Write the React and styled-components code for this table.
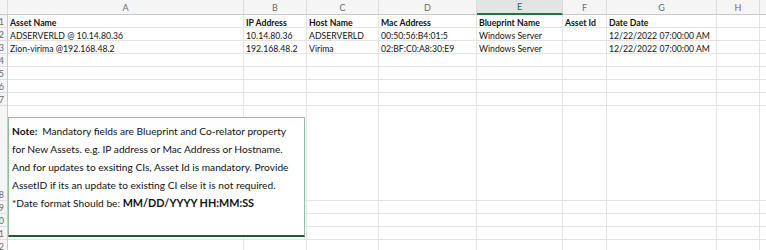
import React from "react";
import styled, { createGlobalStyle } from "styled-components";

const GlobalStyle = createGlobalStyle`
  html, body {
    margin: 0;
    padding: 0;
    background: #ffffff;
    overflow: hidden;
  }
  body {
    font-family: Lato, "Open Sans", sans-serif;
  }
`;

// column widths (row header first), the last column runs off the edge
const COLS = [
  { key: "", width: 22 },
  { key: "A", width: 236 },
  { key: "B", width: 63 },
  { key: "C", width: 72 },
  { key: "D", width: 98 },
  { key: "E", width: 86 },
  { key: "F", width: 44 },
  { key: "G", width: 110 },
  { key: "H", width: 43 },
  { key: "I", width: 40 },
];

const ROW_HEIGHTS = [13, 13, 13, 13, 13, 13, 13, 95, 13, 13, 13, 13];

const DATA = [
  ["Asset Name", "IP Address", "Host Name", "Mac Address", "Blueprint Name", "Asset Id", "Date Date", ""],
  ["ADSERVERLD @ 10.14.80.36", "10.14.80.36", "ADSERVERLD", "00:50:56:B4:01:5", "Windows Server", "", "12/22/2022 07:00:00 AM", ""],
  ["Zion-virima @192.168.48.2", "192.168.48.2", "Virima", "02:BF:C0:A8:30:E9", "Windows Server", "", "12/22/2022 07:00:00 AM", ""],
];

const NOTE_LINES = [
  "Mandatory fields are Blueprint and Co-relator property",
  "for New Assets. e.g. IP address or Mac Address or Hostname.",
  "And for updates to exsiting CIs, Asset Id is mandatory. Provide",
  "AssetID if its an update to existing CI else it is not required.",
];

export default function App() {
  return (
    <>
      <GlobalStyle />
      <Viewport>
        <Sheet>
          <HeaderRow>
            {COLS.map((c, i) => (
              <ColHead key={i} $w={c.width} $active={c.key === "E"}>
                {c.key}
              </ColHead>
            ))}
          </HeaderRow>
          {ROW_HEIGHTS.map((h, r) => (
            <Row key={r}>
              <RowHead $w={COLS[0].width} $h={h}>
                {r + 1}
              </RowHead>
              {COLS.slice(1).map((c, ci) => (
                <Cell key={ci} $w={c.width} $h={h} $bold={r === 0}>
                  {DATA[r] ? DATA[r][ci] : ""}
                </Cell>
              ))}
            </Row>
          ))}
        </Sheet>

        <NoteBox>
          {NOTE_LINES.map((line, i) => (
            <NoteLine key={i}>
              {i === 0 && <b>Note:&nbsp; </b>}
              {line}
            </NoteLine>
          ))}
          <NoteLine>
            *Date format Should be: <Strong>MM/DD/YYYY HH:MM:SS</Strong>
          </NoteLine>
        </NoteBox>
      </Viewport>
    </>
  );
}

// ----- styles -----
const Viewport = styled.div`
  position: relative;
  width: 766px;
  height: 250px;
  overflow: hidden;
`;

const Sheet = styled.div`
  display: flex;
  flex-direction: column;
  margin-left: -14px;
  width: 820px;
`;

const HeaderRow = styled.div`
  display: flex;
  height: 15px;
  background: #f5f5f5;
`;

const ColHead = styled.div`
  flex: 0 0 ${(p) => p.$w}px;
  box-sizing: border-box;
  height: 15px;
  display: flex;
  align-items: center;
  justify-content: center;
  font-family: Lato, "Liberation Sans", sans-serif;
  font-size: 9px;
  color: ${(p) => (p.$active ? "#217346" : "#6b6b6b")};
  background: ${(p) => (p.$active ? "#e4e4e4" : "#f5f5f5")};
  border-right: 1px solid #dcdcdc;
  border-bottom: ${(p) => (p.$active ? "2px solid #217346" : "1px solid #c8c8c8")};
`;

const Row = styled.div`
  display: flex;
`;

const RowHead = styled.div`
  flex: 0 0 ${(p) => p.$w}px;
  height: ${(p) => p.$h}px;
  box-sizing: border-box;
  display: flex;
  align-items: flex-end;
  justify-content: flex-end;
  padding: 0 3px 0 0;
  font-family: Lato, "Liberation Sans", sans-serif;
  font-size: 9px;
  line-height: 10px;
  color: #6b6b6b;
  background: #f5f5f5;
  border-bottom: 1px solid #dcdcdc;
  border-right: 1px solid #c8c8c8;
`;

const Cell = styled.div`
  flex: 0 0 ${(p) => p.$w}px;
  height: ${(p) => p.$h}px;
  box-sizing: border-box;
  padding: 0 2px;
  display: flex;
  align-items: flex-end;
  white-space: nowrap;
  overflow: visible;
  font-family: Lato, "Open Sans", sans-serif;
  font-size: 8.7px;
  line-height: 9px;
  font-weight: ${(p) => (p.$bold ? 700 : 400)};
  color: #111;
  border-right: 1px solid #e3e3e3;
  border-bottom: 1px solid #e3e3e3;
`;

// floating text box laid over the sheet
const NoteBox = styled.div`
  position: absolute;
  left: 8px;
  top: 117px;
  width: 297px;
  height: 120px;
  box-sizing: border-box;
  background: #ffffff;
  border: 1px solid #8cc19f;
  border-bottom: 2px solid #1d5c36;
  padding: 4px 3px;
  font-family: Lato, "Open Sans", sans-serif;
  font-size: 10.2px;
  line-height: 18px;
  color: #111;
`;

const NoteLine = styled.div`
  white-space: nowrap;
`;

const Strong = styled.b`
  font-size: 10.8px;
  font-weight: 700;
`;
